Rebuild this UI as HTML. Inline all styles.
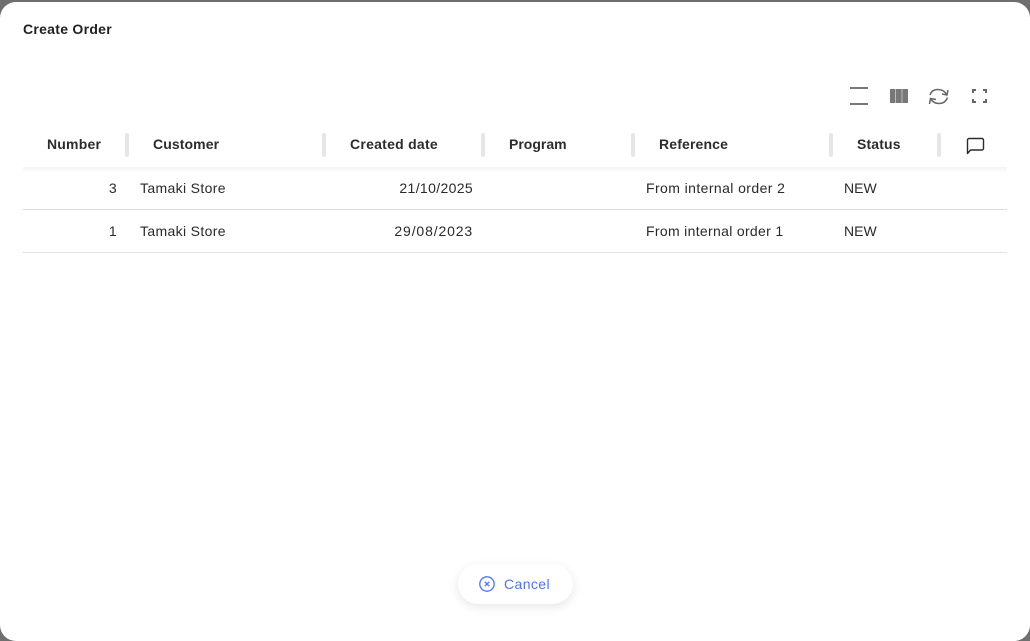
<!DOCTYPE html>
<html><head><meta charset="utf-8"><style>
html,body{margin:0;padding:0;width:1030px;height:641px;overflow:hidden;background:#6f6f6f}
body{font-family:"Liberation Sans",sans-serif;position:relative}
#m{position:absolute;left:0;top:2px;width:1030px;height:639px;background:#fff;border-radius:16px}
.t{position:absolute;white-space:nowrap;line-height:16px;font-size:14px;color:#2a2a2e;letter-spacing:.35px}
.h{font-weight:bold;font-size:14px;color:#2c2c30}
.r{text-align:right}
.s{position:absolute;top:133px;width:4px;height:24px;background:#e6e6e6;border-radius:2px}
.l{position:absolute;left:23px;width:984px;height:1px}
svg{position:absolute;overflow:visible}
</style></head><body>
<div id="m"></div>
<div class="t" style="left:23px;top:21px;font-weight:bold;color:#1f1f26;letter-spacing:.28px">Create Order</div>

<svg style="left:845px;top:85px" width="150" height="24" fill="none">
<rect x="5" y="2" width="18" height="2" fill="#777"/><rect x="5" y="18" width="18" height="2" fill="#777"/>
<rect x="45" y="4" width="18" height="14" fill="#777"/><rect x="50" y="4" width="1" height="14" fill="#bbb"/><rect x="56.500" y="4" width="1" height="14" fill="#bbb"/>
<path d="M85 10C86 6.500 89 4.500 93 4.500C97 4.500 100 6.500 101.500 9.500M102.500 12.500C101 16.500 98 18.500 94 18.500C90 18.500 87 16.500 85.500 13.500" stroke="#666" stroke-width="1.500"/>
<path d="M103 5L102 10L97 9M84.500 19L85.500 13.500L91 14.500" stroke="#666" stroke-width="1.500"/>
<path d="M128 8V5H131M138 5H141V8M141 14V17H138M131 17H128V14" stroke="#666" stroke-width="2"/>
</svg>

<div style="position:absolute;left:23px;top:167px;width:984px;height:6px;background:linear-gradient(#f3f3f3,#fff)"></div>
<div class="t h" style="left:47px;top:136px;letter-spacing:.2px">Number</div>
<div class="s" style="left:125px"></div>
<div class="t h" style="left:153px;top:136px;letter-spacing:.1px">Customer</div>
<div class="s" style="left:322px"></div>
<div class="t h" style="left:350px;top:136px;letter-spacing:.26px">Created date</div>
<div class="s" style="left:481px"></div>
<div class="t h" style="left:509px;top:136px;letter-spacing:0">Program</div>
<div class="s" style="left:631px"></div>
<div class="t h" style="left:659px;top:136px;letter-spacing:.15px">Reference</div>
<div class="s" style="left:829px"></div>
<div class="t h" style="left:857px;top:136px;letter-spacing:.15px">Status</div>
<div class="s" style="left:937px"></div>
<svg style="left:966px;top:137px" width="18" height="18" fill="none"><path d="M1.500 16.500V3A1.500 1.500 0 0 1 3 1.500H16A1.500 1.500 0 0 1 17.500 3V11.500A1.500 1.500 0 0 1 16 13H4.500Z" stroke="#2b2b2b" stroke-width="1.400" stroke-linejoin="round"/></svg>

<div class="t r" style="left:60px;width:57px;top:180px">3</div>
<div class="t" style="left:140px;top:180px">Tamaki Store</div>
<div class="t r" style="left:370px;width:103px;top:180px;letter-spacing:.35px">21/10/2025</div>
<div class="t" style="left:646px;top:180px;letter-spacing:.41px">From internal order 2</div>
<div class="t" style="left:844px;top:180px;letter-spacing:0">NEW</div>
<div class="l" style="top:209px;background:#dcdcdc"></div>
<div class="t r" style="left:60px;width:57px;top:223px">1</div>
<div class="t" style="left:140px;top:223px">Tamaki Store</div>
<div class="t r" style="left:370px;width:103px;top:223px;letter-spacing:.85px">29/08/2023</div>
<div class="t" style="left:646px;top:223px;letter-spacing:.32px">From internal order 1</div>
<div class="t" style="left:844px;top:223px;letter-spacing:0">NEW</div>
<div class="l" style="top:252px;background:#e2e2e2"></div>

<div style="position:absolute;left:458px;top:564px;width:115px;height:40px;border-radius:20px;background:#fff;box-shadow:0 3px 10px rgba(0,0,0,.1)"></div>
<svg style="left:478px;top:575px" width="18" height="18" fill="none" stroke="#4c75f2" stroke-width="1.300"><circle cx="9" cy="9" r="7.200"/><path d="M6.800 6.800L11.200 11.200M11.200 6.800L6.800 11.200"/></svg>
<div class="t" style="left:504px;top:576px;color:#4c75f2;letter-spacing:.4px">Cancel</div>
</body></html>
